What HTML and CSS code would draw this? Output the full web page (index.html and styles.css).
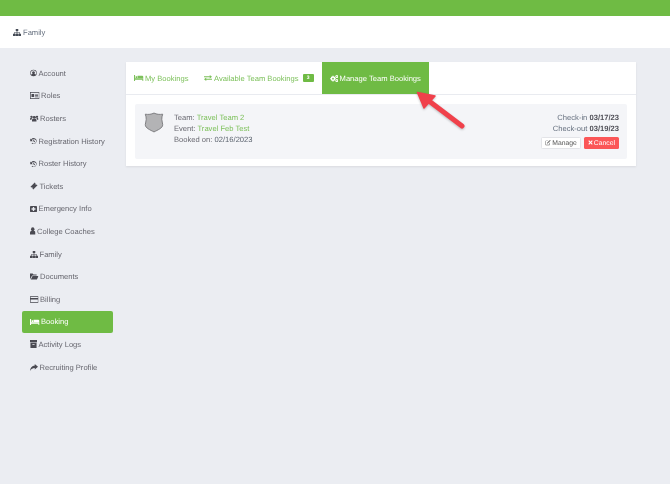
FILE: index.html
```html
<!DOCTYPE html>
<html lang="en">
<head>
<meta charset="utf-8">
<title>Manage Team Bookings</title>
<link rel="stylesheet" href="styles.css">
</head>
<body>
<svg class="defs" width="0" height="0">
  <defs>
    <symbol id="i-sitemap" viewBox="0 0 16 14" preserveAspectRatio="none"><path d="M5.500 0h5v4H8.700v2.300h5.100V9.500H16V14h-5V9.500h1.700V7.500H8.700v2H10.500V14h-5V9.500h1.800v-2H3.300v2H5V14H0V9.500h2.200V6.300h5.100V4H5.500z"/></symbol>
    <symbol id="i-user-circle" viewBox="0 0 16 16"><path fill-rule="evenodd" d="M8 .5a7.500 7.500 0 1 0 0 15 7.500 7.500 0 0 0 0-15zm0 1.200a6.300 6.300 0 0 1 4.900 10.200C12.300 10.500 11 9.800 10 9.700a3.200 3.200 0 1 0-4 0c-1 .1-2.300.8-2.900 2.200A6.300 6.300 0 0 1 8 1.700z"/></symbol>
    <symbol id="i-card" viewBox="0 0 16 13" preserveAspectRatio="none"><path fill-rule="evenodd" d="M0 0h16v13H0zm1.200 1.200v10.600h13.600V1.200zM2.500 3.500h4.500v6H2.500zM8.500 4h5v1.200h-5zM8.500 6.200h5v1.200h-5zM8.500 8.400h5v1.200h-5z"/></symbol>
    <symbol id="i-users" viewBox="0 0 16 15" preserveAspectRatio="none"><circle cx="8" cy="5" r="3"/><circle cx="2.800" cy="4" r="2.300"/><circle cx="13.200" cy="4" r="2.300"/><path d="M3.800 14v-3c0-1.800 1.200-3 2.200-3h4c1 0 2.200 1.200 2.200 3v3zM0 10V8c0-1.300.8-1.700 1.500-1.700h2.200c.3 0 .5.100.7.300C3.300 7.500 2.800 9 2.800 10zM16 10V8c0-1.300-.8-1.700-1.500-1.700h-2.200c-.3 0-.5.100-.7.300 1.100.9 1.600 2.400 1.600 3.400z"/></symbol>
    <symbol id="i-history" viewBox="0 0 16 16"><path d="M8.500 1A7 7 0 0 0 2.600 4.300L.5 2.500v6h6L4.300 6.200A5 5 0 1 1 5 12L3.700 13.500A7 7 0 1 0 8.500 1z"/><path d="M7.500 4.500h2v3.200l2.300 1.500-1 1.500L7.500 8.800z"/></symbol>
    <symbol id="i-ticket" viewBox="0 0 16 16"><path d="M9.500 1 11 2.500a1.800 1.800 0 0 0 2.500 2.500L15 6.500 6.500 15 5 13.500A1.800 1.800 0 0 0 2.500 11L1 9.500z"/></symbol>
    <symbol id="i-plus-square" viewBox="0 0 16 16"><path fill-rule="evenodd" d="M2 1h12a2 2 0 0 1 2 2v10a2 2 0 0 1-2 2H2a2 2 0 0 1-2-2V3a2 2 0 0 1 2-2zM6.500 3.500v3h-3v3h3v3h3v-3h3v-3h-3v-3z"/></symbol>
    <symbol id="i-user" viewBox="0 0 12 16" preserveAspectRatio="none"><circle cx="6" cy="4.500" r="3.800"/><path d="M0 15v-3.500C0 9 1.500 8 3 8h6c1.500 0 3 1 3 3.500V15z"/></symbol>
    <symbol id="i-folder" viewBox="0 0 16 14" preserveAspectRatio="none"><path d="M0 13V1h5l1.500 2h6v2H4L.8 11zM4.800 6H16l-3 7H1.500z"/></symbol>
    <symbol id="i-credit" viewBox="0 0 16 13" preserveAspectRatio="none"><path fill-rule="evenodd" d="M1.500 0h13A1.500 1.500 0 0 1 16 1.500v10a1.500 1.500 0 0 1-1.500 1.500h-13A1.500 1.500 0 0 1 0 11.500v-10A1.500 1.500 0 0 1 1.500 0zM1.200 6.500v5.300h13.600V6.500zm0-5.300v2.300h13.600V1.200z"/></symbol>
    <symbol id="i-bed" viewBox="0 0 16 11" preserveAspectRatio="none"><path d="M0 0h1.800v6H16v5h-1.800V8.500H1.800V11H0zM2.800 2.500h2.500V5.500H2.800zM6 1.500h7.500a2.500 2.500 0 0 1 2.500 2.500v1.500H6z"/></symbol>
    <symbol id="i-archive" viewBox="0 0 16 14" preserveAspectRatio="none"><path fill-rule="evenodd" d="M0 0h16v4H0zM1 5h14v9H1zM5.500 7v1.500h5V7z"/></symbol>
    <symbol id="i-share" viewBox="0 0 16 14" preserveAspectRatio="none"><path d="M9.500 0 16 5.500 9.500 11V8C5.500 8 2.500 9.500 0 14 0 8 4 3.500 9.500 3z"/></symbol>
    <symbol id="i-exchange" viewBox="0 0 16 12" preserveAspectRatio="none"><path d="M0 2.500h11.500V0L16 3.500 11.500 7V4.700H0zM16 7.300H4.500V5L0 8.500 4.500 12V9.500H16z"/></symbol>
    <symbol id="i-cogs" viewBox="0 0 16 14"><path fill-rule="evenodd" d="M5.500 2.500a4.800 4.800 0 1 0 0 9.600 4.800 4.800 0 0 0 0-9.600zm0 3.100a1.700 1.700 0 1 1 0 3.400 1.700 1.700 0 0 1 0-3.400z"/><path d="M4.300 1.500h2.400v2.200H4.300zM4.300 11h2.400v2.200H4.300zM.2 6.100h2.200v2.400H.2zM8.600 6.100h2.200v2.400H8.600z"/><path fill-rule="evenodd" d="M13 0a3 3 0 1 0 0 6 3 3 0 0 0 0-6zm0 2a1 1 0 1 1 0 2 1 1 0 0 1 0-2zM13 8a3 3 0 1 0 0 6 3 3 0 0 0 0-6zm0 2a1 1 0 1 1 0 2 1 1 0 0 1 0-2z"/></symbol>
    <symbol id="i-edit" viewBox="0 0 16 16"><path d="M2.500 3H9L7.800 4.200H2.800c-.4 0-.6.200-.6.600v8.400c0 .4.200.6.600.6h8.400c.4 0 .6-.2.600-.6V9.500L13 8.300v5.200c0 1-.8 1.500-1.500 1.500h-9C1.500 15 1 14.200 1 13.500v-9C1 3.500 1.800 3 2.500 3z"/><path d="M13.300 1l1.800 1.800-7.500 7.500-2.500.7.700-2.500z"/></symbol>
    <symbol id="i-times" viewBox="0 0 16 16"><path d="M3.500 1 8 5.500 12.500 1 15 3.500 10.500 8l4.500 4.500-2.500 2.500L8 10.500 3.500 15 1 12.500 5.500 8 1 3.500z"/></symbol>
  </defs>
</svg>
<div class="topbar"></div>
<header class="subheader">
  <svg class="ico flat"><use href="#i-sitemap"/></svg><span>Family</span>
</header>
<div class="layout">
  <nav class="sidebar">
    <a class="nav-item"><svg class="ico w7"><use href="#i-user-circle"/></svg>Account</a>
    <a class="nav-item"><svg class="ico w9 mid"><use href="#i-card"/></svg>Roles</a>
    <a class="nav-item"><svg class="ico w8 mid"><use href="#i-users"/></svg>Rosters</a>
    <a class="nav-item"><svg class="ico w7"><use href="#i-history"/></svg>Registration History</a>
    <a class="nav-item"><svg class="ico w7"><use href="#i-history"/></svg>Roster History</a>
    <a class="nav-item"><svg class="ico"><use href="#i-ticket"/></svg>Tickets</a>
    <a class="nav-item"><svg class="ico w7"><use href="#i-plus-square"/></svg>Emergency Info</a>
    <a class="nav-item"><svg class="ico w5"><use href="#i-user"/></svg>College Coaches</a>
    <a class="nav-item"><svg class="ico flat"><use href="#i-sitemap"/></svg>Family</a>
    <a class="nav-item"><svg class="ico w8 mid"><use href="#i-folder"/></svg>Documents</a>
    <a class="nav-item"><svg class="ico w8 mid"><use href="#i-credit"/></svg>Billing</a>
    <a class="nav-item active"><svg class="ico w9 bed"><use href="#i-bed"/></svg>Booking</a>
    <a class="nav-item"><svg class="ico w7"><use href="#i-archive"/></svg>Activity Logs</a>
    <a class="nav-item"><svg class="ico flat"><use href="#i-share"/></svg>Recruiting Profile</a>
  </nav>
  <main class="panel">
    <div class="tabs">
      <a class="tab"><svg class="ico w9 bed"><use href="#i-bed"/></svg>My Bookings</a>
      <a class="tab"><svg class="ico bed"><use href="#i-exchange"/></svg>Available Team Bookings<span class="badge">3</span></a>
      <a class="tab current"><svg class="ico w8 flat"><use href="#i-cogs"/></svg>Manage Team Bookings</a>
    </div>
    <div class="panel-body">
      <div class="booking">
        <svg class="crest" viewBox="0 0 24 24" preserveAspectRatio="none">
          <path d="M2.500 2.500C6 3 9 2.800 12 1.200c3 1.600 6 1.800 9.500 1.300-.8 2-1 4-1 6 0 2.500 1 3.500 1 6 0 4-5.500 6-9.500 8.300C8 20.500 2.500 18.500 2.500 14.500c0-2.500 1-3.500 1-6 0-2-.2-4-1-6z" fill="#b3b3b5" stroke="#77777a" stroke-width="1"/>
        </svg>
        <div class="details">
          <div>Team: <a class="link">Travel Team 2</a></div>
          <div>Event: <a class="link">Travel Feb Test</a></div>
          <div>Booked on: <span class="date">02/16/2023</span></div>
        </div>
        <div class="meta">
          <div>Check-in <b>03/17/23</b></div>
          <div>Check-out <b>03/19/23</b></div>
          <div class="actions">
            <a class="btn btn-light"><svg class="ico w6"><use href="#i-edit"/></svg><span class="btn-label">Manage</span></a>
            <a class="btn btn-red"><svg class="ico small"><use href="#i-times"/></svg><span class="btn-label">Cancel</span></a>
          </div>
        </div>
      </div>
    </div>
  </main>
</div>
<svg class="arrow" width="60" height="50" viewBox="0 0 60 50">
  <path d="M48 38 15 13" stroke="#f0414b" stroke-width="5" stroke-linecap="round" fill="none"/>
  <path d="M3.500 4.500 21 8 10 20z" fill="#f0414b" stroke="#f0414b" stroke-width="1.500" stroke-linejoin="round"/>
</svg>
</body>
</html>
```
FILE: styles.css
```css
* { box-sizing: border-box; }
html, body { margin: 0; height: 100%; }
body {
  position: relative;
  min-height: 484px;
  background: #ebedf2;
  font-family: "Liberation Sans", Arial, sans-serif;
  font-size: 7.600px;
  text-rendering: geometricPrecision;
  color: #66666e;
  overflow: hidden;
}
.defs { position: absolute; }
.ico { width: 8px; height: 8px; fill: currentColor; margin-right: 1.500px; flex: none; }
.ico.w5 { width: 5.500px; }
.ico.w6 { width: 6px; height: 7px; }
.ico.w7 { width: 7px; }
.ico.w8 { width: 8.500px; }
.ico.w9 { width: 9.500px; }
.ico.mid { height: 7px; }
.ico.flat { height: 7px; }
.ico.bed { height: 6px; }
.ico.small { width: 5px; height: 5px; }
.topbar { height: 16px; background: #6fbb44; }
.subheader {
  height: 32px;
  background: #fff;
  display: flex;
  align-items: center;
  padding-left: 13px;
  color: #66707f;
}
.subheader span { will-change: transform; }
.subheader .ico { margin-right: 2px; color: #444a55; }
.layout { display: flex; align-items: flex-start; padding: 14px 34px 0 22px; gap: 13px; will-change: transform; }
.sidebar { width: 91px; display: flex; flex-direction: column; }
.nav-item {
  height: 22.600px;
  display: flex;
  align-items: center;
  padding-left: 8px;
  border-radius: 2px;
  white-space: nowrap;
}
.nav-item .ico { color: #4a4a52; }
.nav-item.active { background: #6fbb44; color: #fff; height: 21.600px; margin: .5px 0; }
.nav-item.active .ico { color: #fff; }
.panel { flex: 1; background: #fff; height: 104px; box-shadow: 0 1px 2px rgba(0,0,0,.08); }
.tabs { height: 33px; display: flex; border-bottom: 1px solid #e9ebf0; }
.tab {
  display: flex;
  align-items: center;
  padding: 0 8px;
  color: #7cc05a;
  white-space: nowrap;
}
.tab.current { background: #6fbb44; color: #fff; height: 32px; }
.badge {
  margin-left: 4px;
  width: 11px;
  height: 8px;
  background: #6fbb44;
  color: #fff;
  font-size: 5px;
  font-weight: bold;
  display: flex;
  align-items: center;
  justify-content: center;
  border-radius: 1px;
}
.panel-body { padding: 9px 9px; }
.booking {
  height: 55px;
  background: #f4f5f8;
  border-radius: 2px;
  display: flex;
  padding: 9px 8px 0 8px;
}
.crest { width: 22px; height: 21px; margin: -1px 9px 0 0; flex: none; }
.details { line-height: 10.800px; flex: 1; color: #6a6a72; }
.link { color: #7cc05a; }
.date { color: #5d6570; }
.meta { text-align: right; line-height: 10.800px; color: #66707f; }
.meta b { color: #4f4f57; }
.actions { display: flex; justify-content: flex-end; gap: 3px; margin-top: 2px; }
.btn {
  height: 12px;
  display: flex;
  align-items: center;
  padding: 0 3px;
  border-radius: 1.500px;
  font-size: 6.800px;
  white-space: nowrap;
}
.btn .ico { margin-right: 1px; }
.btn-label { line-height: 8px; padding-top: 2px; }
.btn-light { background: #fff; border: 1px solid #e3e4e8; color: #555; }
.btn-red { background: #fb5657; color: #fff; padding: 0 4px; }
.arrow { position: absolute; left: 414px; top: 88px; filter: drop-shadow(0 1px 1px rgba(0,0,0,.25)); }
```
